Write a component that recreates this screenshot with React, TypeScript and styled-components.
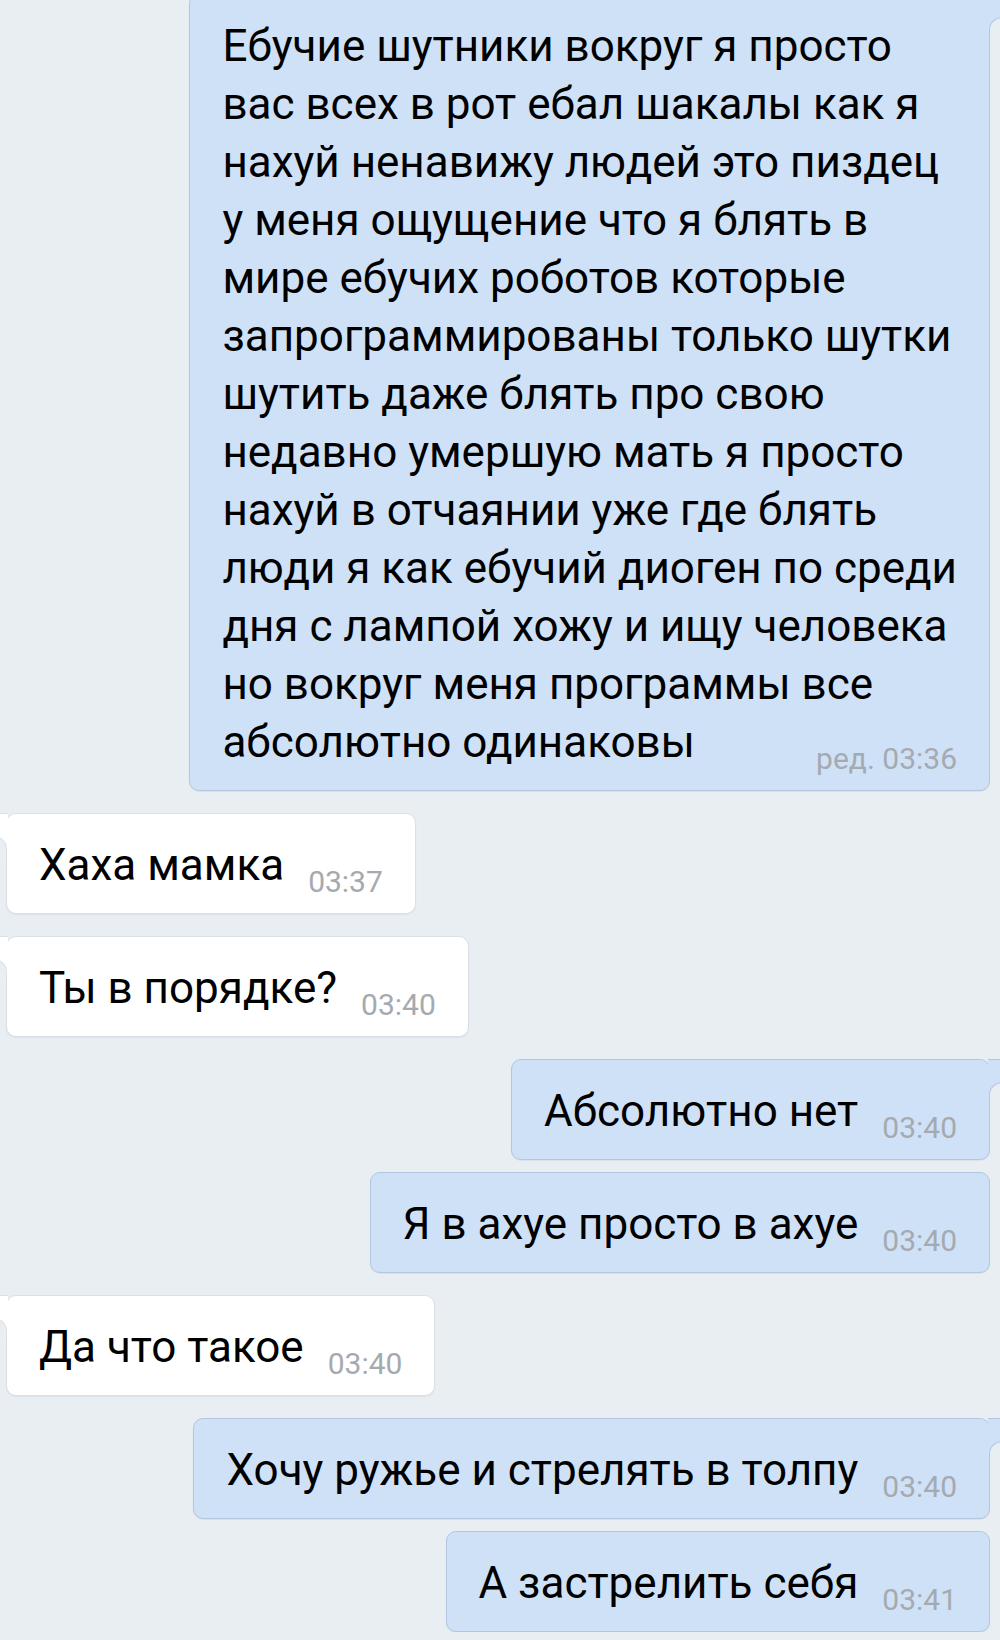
import React from 'react';
import styled, { createGlobalStyle, css } from 'styled-components';

const PAGE_BG = '#e9eef3';
const OUT_BG = '#cfe1f7';
const OUT_BORDER = '#b3c6df';
const IN_BG = '#ffffff';
const IN_BORDER = '#dbe0e6';

const GlobalStyle = createGlobalStyle`
  html, body {
    margin: 0;
    padding: 0;
    background: ${PAGE_BG};
    overflow: hidden;
  }
  body {
    font-family: Roboto, 'Noto Sans', sans-serif;
    -webkit-font-smoothing: antialiased;
  }
`;

const Chat = styled.div`
  display: flex;
  flex-direction: column;
  padding: 0 10px 0 6px;
  margin-top: -6px;
`;

const Row = styled.div<{ $out: boolean; $first: boolean }>`
  display: flex;
  justify-content: ${p => (p.$out ? 'flex-end' : 'flex-start')};
  margin-top: ${p => (p.$first ? 22 : 12)}px;
  &:first-child {
    margin-top: 0;
  }
`;

const Bubble = styled.div<{ $out: boolean }>`
  position: relative;
  box-sizing: border-box;
  background: ${p => (p.$out ? OUT_BG : IN_BG)};
  border: 1px solid ${p => (p.$out ? OUT_BORDER : IN_BORDER)};
  border-radius: 10px;
  box-shadow: 0 1px 1px rgba(60, 80, 110, 0.08);
  padding: 22px 32px 19px 32px;
  color: #000;
  font-size: 44px;
  line-height: 58px;
`;

const Tail = styled.span<{ $out: boolean }>`
  position: absolute;
  top: -1px;
  width: 12px;
  height: 40px;
  box-sizing: border-box;
  background: ${p => (p.$out ? OUT_BG : IN_BG)};
  border-top: 1px solid ${p => (p.$out ? OUT_BORDER : IN_BORDER)};
  ${p =>
    p.$out
      ? css`
          right: -11px;
        `
      : css`
          left: -7px;
          width: 8px;
        `}

  &::after {
    content: '';
    position: absolute;
    top: 22px;
    width: 20px;
    height: 30px;
    background: ${PAGE_BG};
    border-top: 1px solid ${p => (p.$out ? OUT_BORDER : IN_BORDER)};
    ${p =>
      p.$out
        ? css`
            left: 1px;
            border-left: 1px solid ${OUT_BORDER};
            border-top-left-radius: 13px;
          `
        : css`
            right: 1px;
            border-right: 1px solid ${IN_BORDER};
            border-top-right-radius: 13px;
          `}
  }
`;

const Time = styled.span`
  float: right;
  position: relative;
  top: 17px;
  margin-left: 24px;
  font-size: 30px;
  line-height: 58px;
  color: #a5aab0;
`;

type Msg = { out: boolean; first: boolean; lines: string[]; time: string };

const messages: Msg[] = [
  {
    out: true,
    first: true,
    time: 'ред. 03:36',
    lines: [
      'Ебучие шутники вокруг я просто',
      'вас всех в рот ебал шакалы как я',
      'нахуй ненавижу людей это пиздец',
      'у меня ощущение что я блять в',
      'мире ебучих роботов которые',
      'запрограммированы только шутки',
      'шутить даже блять про свою',
      'недавно умершую мать я просто',
      'нахуй в отчаянии уже где блять',
      'люди я как ебучий диоген по среди',
      'дня с лампой хожу и ищу человека',
      'но вокруг меня программы все',
      'абсолютно одинаковы',
    ],
  },
  { out: false, first: true, time: '03:37', lines: ['Хаха мамка'] },
  { out: false, first: true, time: '03:40', lines: ['Ты в порядке?'] },
  { out: true, first: true, time: '03:40', lines: ['Абсолютно нет'] },
  { out: true, first: false, time: '03:40', lines: ['Я в ахуе просто в ахуе'] },
  { out: false, first: true, time: '03:40', lines: ['Да что такое'] },
  { out: true, first: true, time: '03:40', lines: ['Хочу ружье и стрелять в толпу'] },
  { out: true, first: false, time: '03:41', lines: ['А застрелить себя'] },
];

const App: React.FC = () => {
  return (
    <>
      <GlobalStyle />
      <Chat>
        {messages.map((m, i) => (
          <Row key={i} $out={m.out} $first={m.first}>
            <Bubble $out={m.out}>
              {m.first && <Tail $out={m.out} />}
              {m.lines.map((line, j) => (
                <React.Fragment key={j}>
                  {j > 0 && <br />}
                  {line}
                </React.Fragment>
              ))}
              <Time>{m.time}</Time>
            </Bubble>
          </Row>
        ))}
      </Chat>
    </>
  );
};

export default App;
